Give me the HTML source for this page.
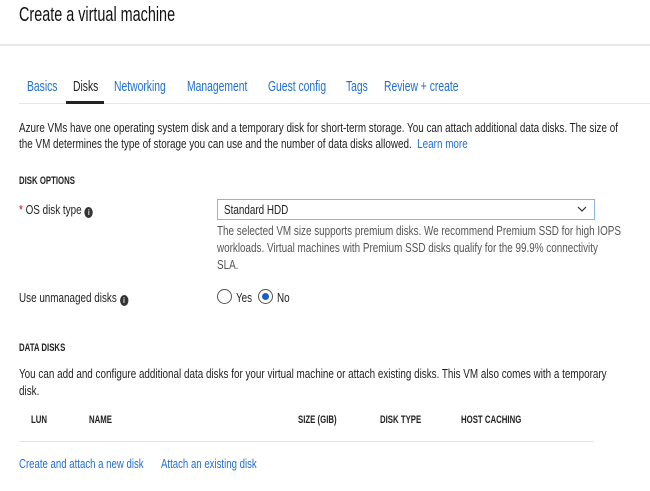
<!DOCTYPE html>
<html><head><meta charset="utf-8"><style>
html,body{margin:0;padding:0;background:#fff;width:650px;height:491px;overflow:hidden}
body{position:relative;font-family:"Liberation Sans",sans-serif;color:#222}
.t{position:absolute;white-space:nowrap;transform:scaleX(0.76);transform-origin:0 50%;font-size:13px;line-height:14px}
.b{color:#1f6fd0}
.g{color:#555}
.h{font-size:11px;font-weight:bold;color:#222;transform:scaleX(0.71)}
.tab{font-size:15px;line-height:16px;transform:scaleX(0.69)}
.line{position:absolute;background:#e4e4e4;height:1px}
.rad{position:absolute;border:1px solid #555;border-radius:50%;box-sizing:border-box}
.info{display:inline-block;width:11px;height:11px;border-radius:50%;background:#333;color:#fff;font-size:8px;line-height:11px;text-align:center;font-weight:bold;vertical-align:-1px;margin-left:4px}
</style></head><body>
<div class="t" style="left:19px;top:5px;font-size:20px;line-height:20px;color:#111;transform:scaleX(0.72)">Create a virtual machine</div>
<div class="line" style="left:0;top:44px;width:650px;height:2px;background:#e8e8e8"></div>

<div class="t b tab" style="left:27px;top:79px">Basics</div>
<div class="t tab" style="left:73px;top:79px;color:#222">Disks</div>
<div class="t b tab" style="left:114px;top:79px">Networking</div>
<div class="t b tab" style="left:187px;top:79px">Management</div>
<div class="t b tab" style="left:268px;top:79px">Guest config</div>
<div class="t b tab" style="left:346px;top:79px">Tags</div>
<div class="t b tab" style="left:384px;top:79px">Review + create</div>
<div class="line" style="left:19px;top:103px;width:631px"></div>
<div style="position:absolute;left:66px;top:101px;width:38px;height:3px;background:#222"></div>

<div class="t" style="left:19px;top:121px">Azure VMs have one operating system disk and a temporary disk for short-term storage. You can attach additional data disks. The size of</div>
<div class="t" style="left:19px;top:137px">the VM determines the type of storage you can use and the number of data disks allowed. &nbsp;<span class="b">Learn more</span></div>

<div class="t h" style="left:19px;top:174px">DISK OPTIONS</div>
<div class="t" style="left:19px;top:203px"><span style="color:#c00">*</span> OS disk type<span class="info">i</span></div>
<div style="position:absolute;left:217px;top:199px;width:378px;height:21px;border:1px solid #8ab4e8;box-sizing:border-box"></div>
<div class="t" style="left:224px;top:203px">Standard HDD</div>
<svg style="position:absolute;left:577px;top:205px" width="10" height="8" viewBox="0 0 10 8"><path d="M1 2 L5 6 L9 2" fill="none" stroke="#333" stroke-width="1.2"/></svg>
<div class="t g" style="left:217px;top:224px">The selected VM size supports premium disks. We recommend Premium SSD for high IOPS</div>
<div class="t g" style="left:217px;top:241px">workloads. Virtual machines with Premium SSD disks qualify for the 99.9% connectivity</div>
<div class="t g" style="left:217px;top:258px">SLA.</div>

<div class="t" style="left:19px;top:291px">Use unmanaged disks<span class="info">i</span></div>
<div class="rad" style="left:217px;top:289px;width:15px;height:15px"></div>
<div class="t" style="left:236px;top:291px">Yes</div>
<div class="rad" style="left:258px;top:289px;width:15px;height:15px"></div>
<div style="position:absolute;left:262px;top:293px;width:7px;height:7px;border-radius:50%;background:#1560c8"></div>
<div class="t" style="left:277px;top:291px">No</div>

<div class="t h" style="left:19px;top:341px">DATA DISKS</div>
<div class="t" style="left:19px;top:367px">You can add and configure additional data disks for your virtual machine or attach existing disks. This VM also comes with a temporary</div>
<div class="t" style="left:19px;top:384px">disk.</div>

<div class="t h" style="left:31px;top:413px">LUN</div>
<div class="t h" style="left:89px;top:413px">NAME</div>
<div class="t h" style="left:298px;top:413px">SIZE (GIB)</div>
<div class="t h" style="left:380px;top:413px">DISK TYPE</div>
<div class="t h" style="left:461px;top:413px">HOST CACHING</div>
<div class="line" style="left:19px;top:441px;width:575px"></div>

<div class="t b" style="left:19px;top:457px;transform:scaleX(0.74)">Create and attach a new disk</div>
<div class="t b" style="left:161px;top:457px;transform:scaleX(0.74)">Attach an existing disk</div>
</body></html>
